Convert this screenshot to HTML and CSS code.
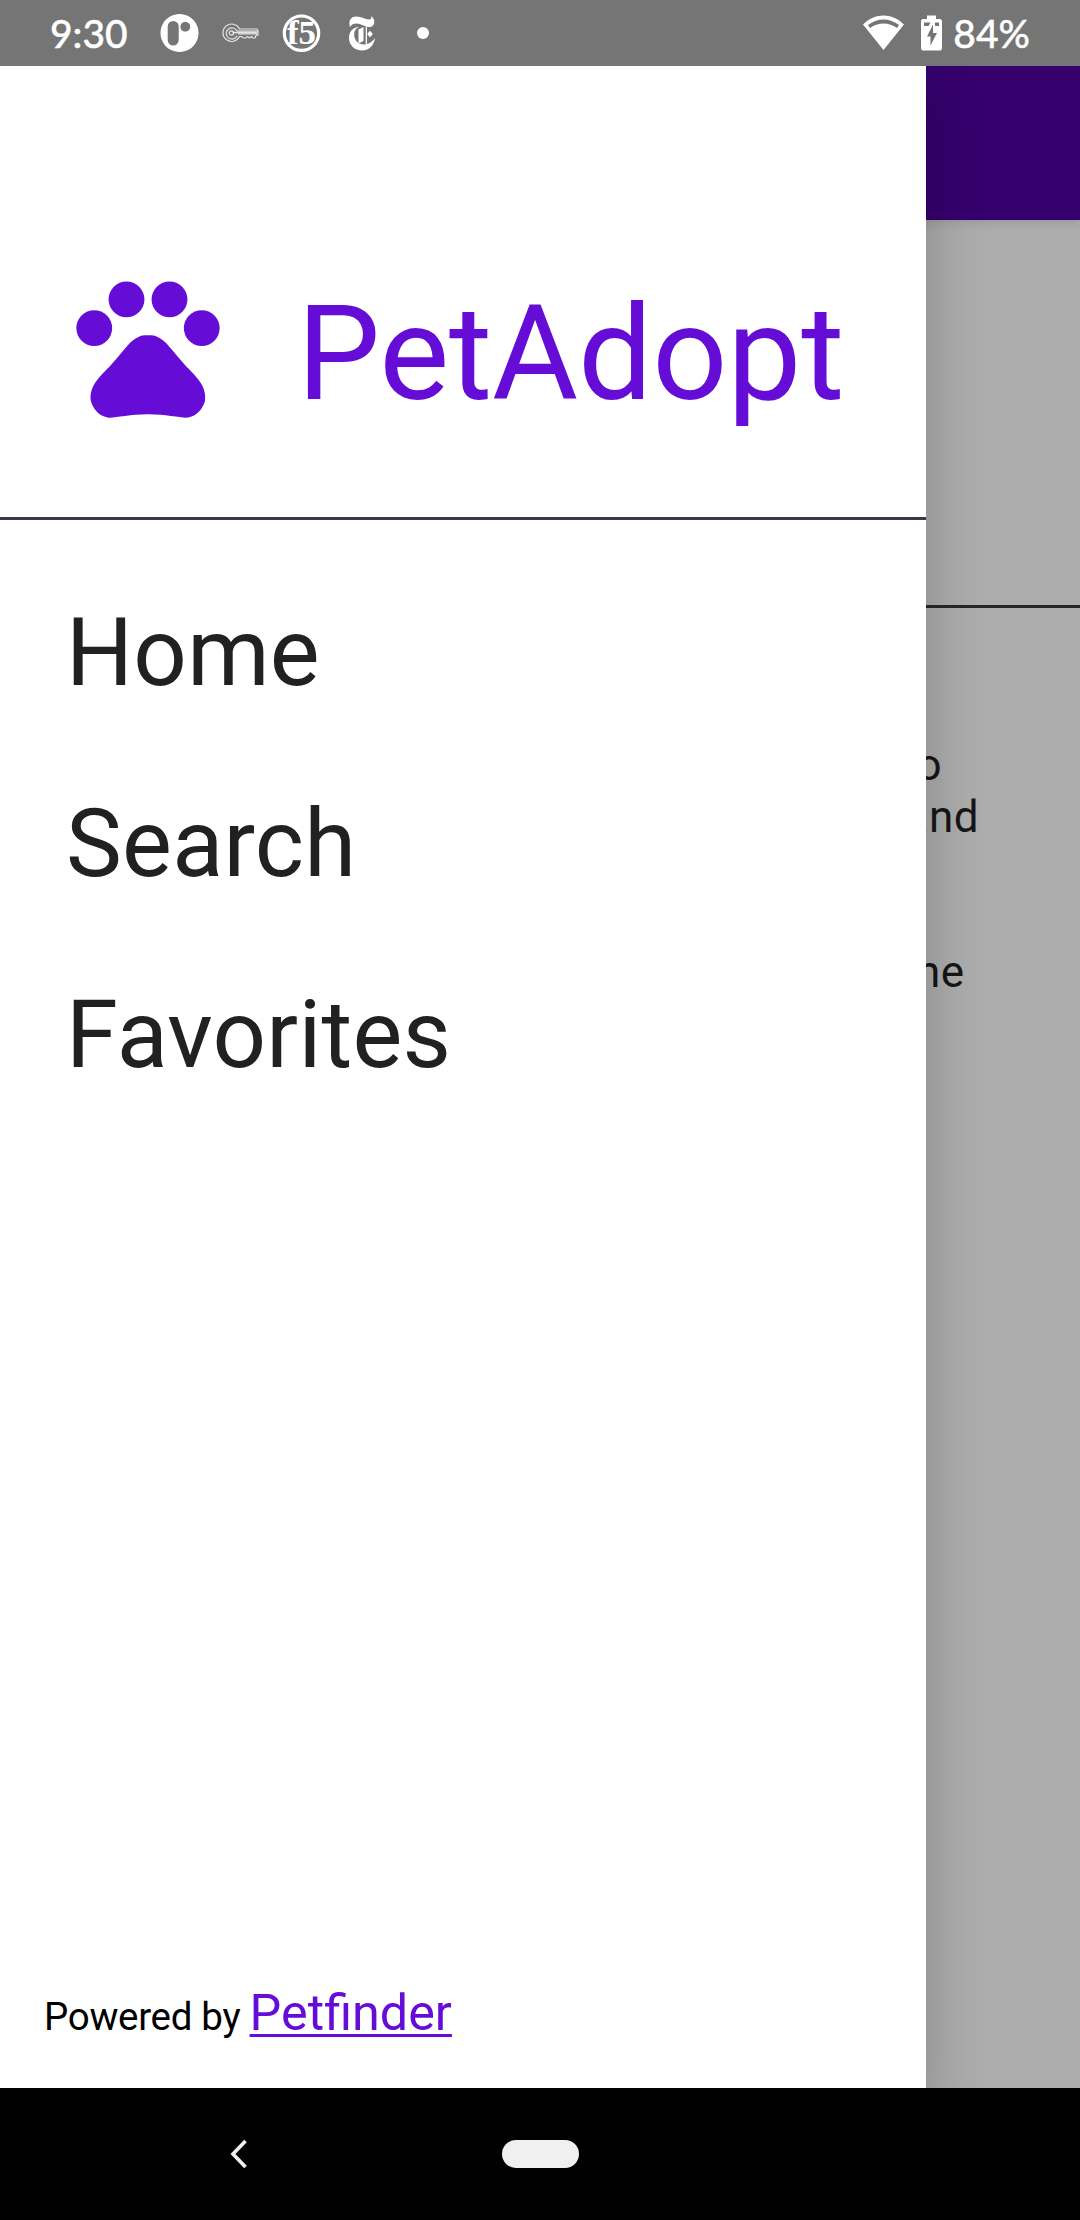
FILE: index.html
```html
<!DOCTYPE html>
<html lang="en">
<head>
<meta charset="utf-8">
<title>PetAdopt</title>
<link rel="stylesheet" href="styles.css">
</head>
<body>
<header class="status">
  <span class="status-text clock">9:30</span>
  <svg class="notifications" width="276" height="66" viewBox="156 0 276 66">
    <path fill="#fff" fill-rule="evenodd" d="M179.500 14a19 19 0 1 0 .01 0zM167.700 26.500a5.500 5.500 0 0 1 11 0V40a5.500 5.500 0 0 1-11 0zM185.300 21.800a4.900 4.900 0 1 1-.01 0z"/>
    <g fill="none" stroke="#e4e4e4" stroke-width="1.200" stroke-linejoin="round">
      <path d="M239.500 29H257l1 1.500V35l-2 .5-1 2.500h-2l-1.500-1.500-2 1.500-2-1.500-2 1.500h-2l-2-1.500h-2a8.700 8.700 0 1 1 0-7.500z"/>
      <path d="M237 31.200a5.600 5.600 0 1 0 0 4.500"/>
      <path d="M258 31.200H237M258 33.800H238"/>
      <path d="M257 32.600h-24.500" stroke-width="1.500"/>
      <circle cx="231.500" cy="33" r="2.200"/>
    </g>
    <circle cx="301.500" cy="33.200" r="17.200" fill="none" stroke="#fff" stroke-width="3.200"/>
    <text class="badge-text" x="287" y="44" textLength="29" lengthAdjust="spacingAndGlyphs">f5</text>
    <g fill="#fff">
      <path d="M350 27c-2-6 1-10.500 6-10.500 6 0 9 3 13 3 2 0 3-1.500 2-3.500 4.500 3 4.500 10-.5 11-4.500.800-9-3.500-14-3.500-3 0-5 1-6.500 3.500z"/>
      <path d="M359 27c-3.500 1.500-4.800 4-4.800 7.500 0 6 4 10 9.800 10 4.500 0 8-2.500 11-6.500-1 7.500-6 12.500-12.500 12.500-8 0-13.500-5.500-13.500-12.500 0-6.500 3.800-10.500 10-11z"/>
      <path d="M358.500 29.500l5-2.500V41l-5 2.500zM365.700 27h1.300v18h-1.300zM370 30.700l2.900 3.300-2.900 3.300-2.900-3.300z"/>
    </g>
    <circle cx="423" cy="33" r="6" fill="#fff"/>
  </svg>
  <svg class="indicators" width="84" height="66" viewBox="858 0 84 66">
    <path fill="#fff" fill-rule="evenodd" d="M861 24.500C873 12.500 890 12.500 902 24.500L881.500 50zM866 25L868 28C876 22 887 22 895 28L897 25C888 17.500 875 17.500 866 25z"/>
    <path fill="#fff" d="M925 15.500h9V19h4.500l1.500 1.500V49l-1.500 1.500h-18L919 49V20.500l1.500-1.500h4.500z"/>
    <path fill="#757575" d="M922 22.500h6.500L926.500 26H922zM931.500 22.500h5.500V26h-4v-3.500zM931 24.500V33h4L928.500 45.500V36.500H925z"/>
  </svg>
  <span class="status-text">84%</span>
</header>

<main class="stage">
  <section class="screen">
    <div class="app-bar"></div>
    <div class="hero"></div>
    <div class="copy">
      <p class="line">to</p>
      <p class="line line-and">and</p>
      <p class="line line-the">the</p>
    </div>
  </section>
  <aside class="drawer">
    <div class="brand">
      <svg class="paw" width="172" height="172" viewBox="0 0 24 24">
        <circle cx="4.500" cy="9.500" r="2.500"/><circle cx="9" cy="5.500" r="2.500"/><circle cx="15" cy="5.500" r="2.500"/><circle cx="19.500" cy="9.500" r="2.500"/>
        <path d="M17.340 14.860c-.87-1.020-1.600-1.890-2.480-2.910-.46-.54-1.050-1.080-1.750-1.320-.11-.04-.22-.07-.33-.09-.25-.04-.52-.04-.78-.04s-.53 0-.79.05c-.11.020-.22.050-.33.090-.7.240-1.280.780-1.750 1.320-.87 1.020-1.600 1.890-2.480 2.910-1.310 1.310-2.920 2.760-2.620 4.790.29 1.020 1.020 2.030 2.330 2.320.73.150 3.060-.44 5.540-.44h.18c2.480 0 4.810.58 5.540.44 1.310-.29 2.040-1.310 2.330-2.320.31-2.040-1.300-3.490-2.610-4.800z"/>
      </svg>
      <h1 class="brand-name">PetAdopt</h1>
    </div>
    <nav class="menu">
      <a>Home</a>
      <a>Search</a>
      <a>Favorites</a>
    </nav>
    <footer class="credit">Powered by <a class="credit-link">Petfinder</a></footer>
  </aside>
</main>

<footer class="nav-bar">
  <svg class="back" width="18" height="30" viewBox="0 0 18 30"><path d="M15.500 2L3 15l12.500 13" fill="none" stroke="#f0f0f0" stroke-width="3.600"/></svg>
  <span class="home-pill"></span>
</footer>
</body>
</html>
```
FILE: styles.css
```css
* { box-sizing: border-box; }

body {
  margin: 0;
  width: 1080px;
  height: 2220px;
  display: flex;
  flex-direction: column;
  overflow: hidden;
  font-family: Roboto, "Liberation Sans", sans-serif;
  background: #000;
}

.status {
  height: 66px;
  display: flex;
  align-items: center;
  padding: 0 50px;
  background: #757575;
  color: #fff;
}

.status-text {
  font: 500 39px/68px Lato, sans-serif;
  -webkit-text-stroke: 0.4px #fff;
}

.clock { width: 106px; }

.badge-text {
  font: bold 33px "Liberation Serif", serif;
  fill: #fff;
}

.indicators { margin-left: auto; margin-right: 9px; }

.stage {
  position: relative;
  flex: 1;
  overflow: hidden;
}

.screen {
  height: 100%;
  background: #adadad;
}

.app-bar {
  height: 154px;
  background: #36006d;
  box-shadow: 0 2px 10px rgba(0, 0, 0, 0.13);
}

.hero {
  height: 388px;
  border-bottom: 3px solid #28262c;
}

.copy {
  padding-top: 131px;
  font-size: 44px;
  line-height: 52px;
  letter-spacing: 0.5px;
  color: #161616;
}

.line { margin: 0 0 0 902px; }

.line-and { margin: 0 0 103px 904.5px; }

.line-the { margin-left: 901px; }

.drawer {
  position: absolute;
  inset: 0 auto 0 0;
  width: 926px;
  display: flex;
  flex-direction: column;
  background: #fff;
  box-shadow: 0 24px 56px rgba(0, 0, 0, 0.23);
}

.brand {
  height: 454px;
  display: flex;
  align-items: flex-start;
  padding: 194px 0 0 62px;
  border-bottom: 3px solid #3c3744;
  color: #650dd6;
}

.paw { fill: currentColor; flex: none; }

.brand-name {
  margin: 17px 0 0 63px;
  font-size: 132px;
  line-height: 155px;
  letter-spacing: -0.2px;
  font-weight: 400;
}

.menu {
  display: flex;
  flex-direction: column;
  padding: 38px 66px;
  font-size: 94px;
  line-height: 191px;
  letter-spacing: 0.25px;
  color: #212121;
}

.credit {
  margin-top: auto;
  padding: 0 44px 39px;
  font-size: 38.5px;
  line-height: 64px;
  letter-spacing: -0.3px;
  color: #000;
}

.credit-link {
  font-size: 50.3px;
  letter-spacing: 0;
  color: #650dd6;
  text-decoration: underline;
  text-decoration-thickness: 2.5px;
  text-underline-offset: 4px;
}

.nav-bar {
  height: 132px;
  display: flex;
  align-items: center;
  padding-left: 230px;
  background: #000;
}

.home-pill {
  width: 77px;
  height: 28px;
  margin-left: 254px;
  border-radius: 14px;
  background: #f0f0f0;
}
```
